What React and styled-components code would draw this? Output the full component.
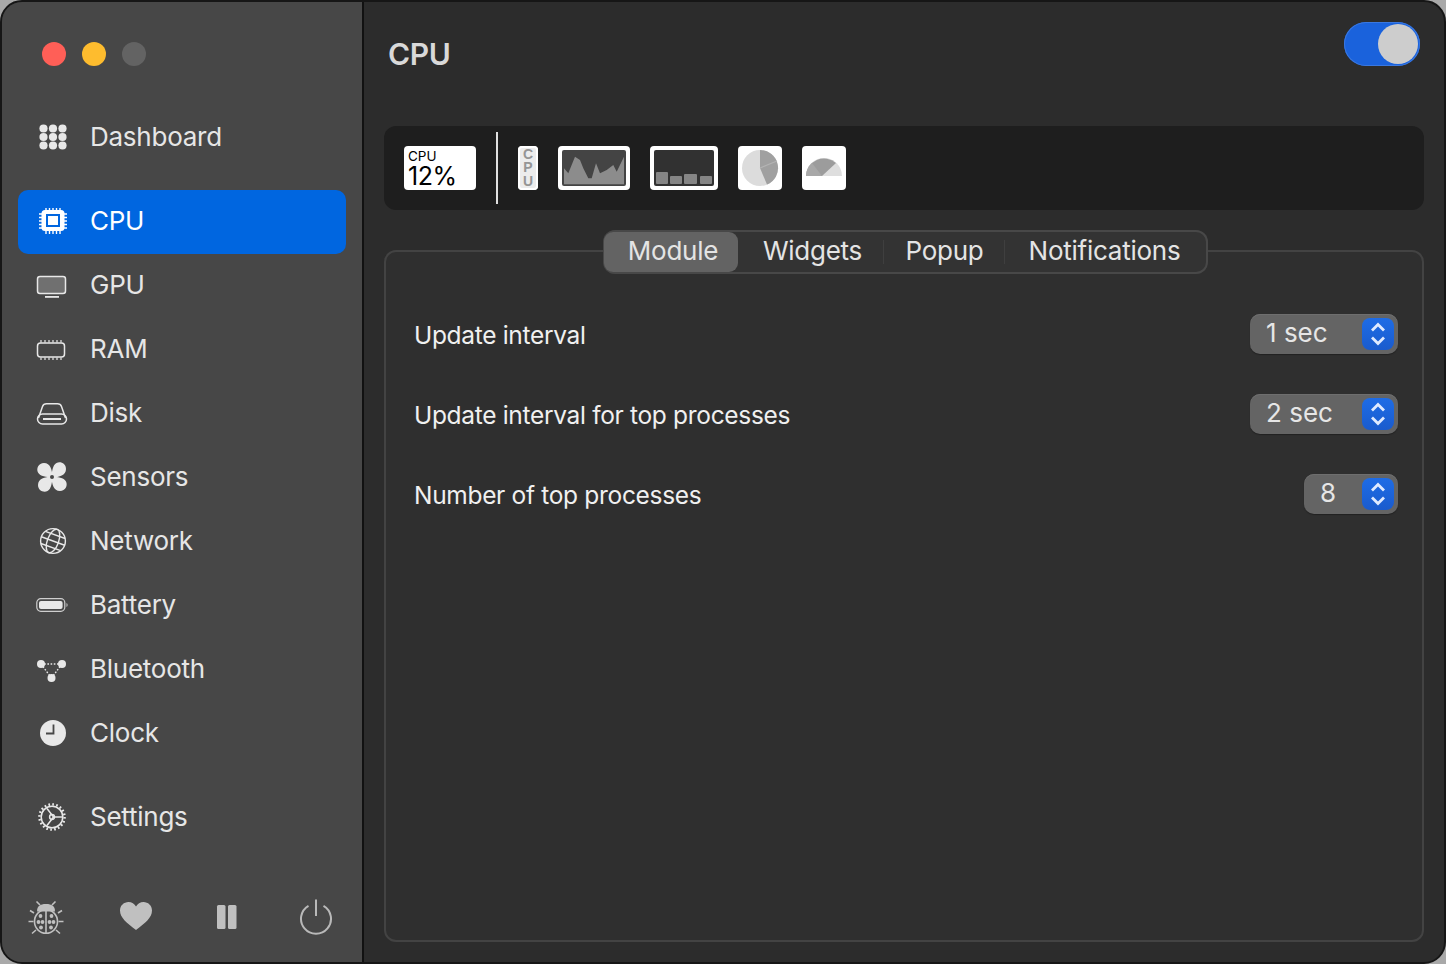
import React from "react";
import styled, { createGlobalStyle } from "styled-components";

const Global = createGlobalStyle`
  html, body { margin: 0; padding: 0; background: #a9a9a9; }
  body { font-family: Inter, "Noto Sans", "Liberation Sans", sans-serif; -webkit-font-smoothing: antialiased; }
  * { box-sizing: border-box; }
`;

const Window = styled.div`
  width: 1446px; height: 964px; display: flex; overflow: hidden;
  border-radius: 22px; border: 2px solid #161616; background: #2c2c2c;
`;
const Sidebar = styled.aside`
  width: 360px; flex: none; background: #474747; display: flex; flex-direction: column;
`;
const Divider = styled.div`width: 2px; flex: none; background: #111;`;
const Lights = styled.div`display: flex; gap: 16px; padding: 40px 0 0 40px; height: 104px;`;
const Light = styled.span`width: 24px; height: 24px; border-radius: 50%; background: ${p => p.$c};`;
const Nav = styled.nav`display: flex; flex-direction: column; padding: 0 16px;`;
const Item = styled.div`
  height: 64px; display: flex; align-items: center; gap: 22px; padding: 0 0 2px 18px;
  border-radius: 10px; font-size: 26px; letter-spacing: -0.25px; line-height: 30px;
  color: ${p => p.$active ? "#fff" : "#e6e6e6"};
  background: ${p => p.$active ? "#0066e0" : "transparent"};
  margin-top: ${p => p.$gap || 0}px;
  svg { flex: none; display: block; }
`;
const ItemText = styled.span`display: block; margin-top: -1px;`;
const Footer = styled.div`
  margin-top: auto; display: grid; grid-template-columns: repeat(4, 90px); height: 44px;
  margin-bottom: 23px; margin-left: -1px; justify-items: center; align-items: center; color: #c0c0c0;
`;
const Main = styled.main`flex: 1; display: flex; flex-direction: column; padding: 0 20px 20px 20px;`;
const Header = styled.header`
  height: 124px; flex: none; display: flex; justify-content: space-between; padding: 20px 4px 0 4px;
`;
const Title = styled.h1`
  margin: 14px 0 0; font-size: 30px; line-height: 36px; font-weight: 600; color: #d9d9d9; letter-spacing: -0.3px;
`;
const Toggle = styled.div`
  width: 76px; height: 44px; border-radius: 22px; background: #1a62dc; padding: 2px 2px;
  display: flex; justify-content: flex-end; box-shadow: inset 0 0 0 1px #3a78e0;
`;
const Knob = styled.span`width: 40px; height: 40px; border-radius: 50%; background: #cdcdcd;`;
const WidgetBar = styled.div`
  height: 84px; flex: none; background: #1e1e1e; border-radius: 12px; display: flex; align-items: center; padding-left: 20px;
`;
const Thumb = styled.div`
  width: ${p => p.$w}px; height: 44px; flex: none; margin-right: ${p => p.$mr}px; background: ${p => p.$bg || "#fff"};
  border-radius: 4px; overflow: hidden;
  svg { display: block; }
`;
const TextThumb = styled(Thumb)`color: #000; padding: 4px 0 0 4px;`;
const Small = styled.div`font-size: 13.5px; line-height: 13px;`;
const Big = styled.div`font-size: 25px; line-height: 26px; letter-spacing: -0.5px; font-weight: 400;`;
const VText = styled(Thumb)`
  display: flex; flex-direction: column; align-items: center; justify-content: center; background: #ececec;
  box-shadow: inset 0 0 0 2px #fff;
  color: #959595; font: 700 14px/13.5px "Liberation Sans", sans-serif;
`;
const Sep = styled.div`width: 2px; height: 72px; flex: none; background: #e0e0e0; margin: 0 20px;`;
const Panel = styled.section`
  flex: 1; margin-top: 40px; border: 2px solid #434343; border-radius: 12px; background: #2f2f2f;
  display: flex; flex-direction: column;
`;
const Tabs = styled.div`
  align-self: flex-start; margin: -22px 0 0 217px; height: 44px; width: 605px; padding: 1px;
  display: flex; align-items: center; box-shadow: inset 0 0 0 2px #484848; border-radius: 12px; background: #333;
  color: #e4e4e4; font-size: 26px; letter-spacing: -0.25px;
`;
const Tab = styled.div`
  height: 40px; display: flex; align-items: center; justify-content: center; width: ${p => p.$w}px;
  border-radius: 9px; background: ${p => p.$active ? "#636363" : "transparent"}; flex: none;
  padding: 0 0 3px ${p => p.$pl || 0}px;
`;
const TabSep = styled.div`width: 1px; height: 24px; flex: none; background: #3f3f3f;`;
const Rows = styled.div`display: flex; flex-direction: column; padding: 20px 24px 0 28px;`;
const Row = styled.div`height: 80px; display: flex; align-items: center; justify-content: space-between;`;
const Label = styled.div`font-size: 24.5px; letter-spacing: -0.32px; color: #f0f0f0; font-weight: 400; padding-top: 2px;`;
const Select = styled.div`
  width: ${p => p.$w}px; height: 40px; border-radius: 10px; background: #646464; display: flex; align-items: center;
  justify-content: space-between; padding: 0 4px 0 ${p => p.$pl}px; color: #e6e6e6; font-size: 26px;
  box-shadow: 0 1px 1px #222, inset 0 1px 0 #6e6e6e;
`;
const SelectValue = styled.span`display: block; margin-top: -3px;`;
const Stepper = styled.div`
  width: 32px; height: 32px; border-radius: 8px; background: linear-gradient(#1e6ce6, #1a5bcd);
  display: flex; align-items: center; justify-content: center; svg { display: block; }
`;

const W = "#e8e8e8";
const Dash = () => (
  <svg width="32" height="32" fill={W}>
    {[7.5, 17, 26.5].flatMap(x => [7.5, 16, 24.5].map(y => <circle key={x + "-" + y} cx={x} cy={y} r="4.1" />))}
  </svg>
);
const Cpu = () => (
  <svg width="32" height="32" fill="none">
    <g stroke="#fff" strokeWidth="1.4">
      {[10, 13.5, 17, 20.5, 24].map(v => (
        <g key={v}>
          <path d={`M${v} 3v4M${v} 25v4`} />
          <path d={`M3 ${v - 1}h4M27 ${v - 1}h4`} />
        </g>
      ))}
    </g>
    <rect x="5.5" y="5" width="23" height="21" rx="3.5" fill="#fff" />
    <rect x="10" y="9" width="14" height="13" fill="#0066e0" />
    <rect x="12" y="11" width="10" height="9" fill="#fff" />
  </svg>
);
const Gpu = () => (
  <svg width="32" height="32">
    <rect x="1.5" y="7.5" width="28" height="17" rx="2.5" fill="#707070" stroke={W} strokeWidth="1.5" />
    <rect x="9" y="27" width="14" height="1.8" fill={W} />
  </svg>
);
const Ram = () => (
  <svg width="32" height="32" fill="none" stroke={W} strokeWidth="1.5">
    <rect x="1.5" y="10" width="27" height="14" rx="3" />
    <path d="M5 7v2.5M9 7v2.5M13 7v2.5M17 7v2.5M21 7v2.5M25 7v2.5M5 24.5V27M9 24.5V27M13 24.5V27M17 24.5V27M21 24.5V27M25 24.5V27" strokeWidth="1.2" />
  </svg>
);
const Disk = () => (
  <svg width="32" height="32" fill="none" stroke={W} strokeWidth="1.5">
    <path d="M2.5 21 L6.5 9.5 Q7.5 6.8 10.5 6.8 H21.5 Q24.5 6.8 25.5 9.5 L29.5 21" />
    <rect x="1.5" y="17" width="29" height="10" rx="5" />
    <path d="M7 22h18" strokeWidth="2" />
  </svg>
);
const Fan = () => (
  <svg width="32" height="32" fill={W}>
    {[0, 90, 180, 270].map(a => (
      <path key={a} transform={`rotate(${a} 16 16)`} d="M16.5 15C16 9 14.5 2 8 2C2.5 2 0 7.5 2 11.5C4 15.5 11 16 15 16.5Z" />
    ))}
    <circle cx="16" cy="16" r="3.6" />
    <circle cx="16" cy="16" r="2" fill="#474747" />
  </svg>
);
const Globe = () => (
  <svg width="32" height="32" fill="none" stroke={W} strokeWidth="1.4">
    <circle cx="17" cy="16" r="12.4" />
    <g transform="rotate(20 17 16)">
      <ellipse cx="17" cy="16" rx="5.6" ry="12.4" />
      <path d="M4.6 16h24.8M6.5 9.5h21M6.5 22.5h21" />
    </g>
  </svg>
);
const Battery = () => (
  <svg width="32" height="32">
    <rect x="0.8" y="9.7" width="28" height="12.6" rx="4" fill="none" stroke="#cfcfcf" strokeWidth="1.2" />
    <rect x="3" y="12" width="23.6" height="8" rx="2" fill={W} />
    <path d="M30.5 14a2.4 2.4 0 0 1 0 4z" fill="#cfcfcf" />
  </svg>
);
const Bt = () => (
  <svg width="32" height="32" fill={W}>
    <path d="M5 11h21M5 11l10.5 14M26 11L15.5 25" stroke={W} strokeWidth="1.4" strokeDasharray="1.6 1.6" fill="none" />
    <circle cx="5" cy="11" r="4" />
    <circle cx="26" cy="11" r="4" />
    <circle cx="15.5" cy="25" r="4" />
  </svg>
);
const Clock = () => (
  <svg width="32" height="32" fill="none">
    <circle cx="17" cy="16" r="13" fill={W} />
    <path d="M17.5 7.5V16.5H10" stroke="#474747" strokeWidth="1.8" />
  </svg>
);
const Gear = () => (
  <svg width="32" height="32" fill="none" stroke={W}>
    <circle cx="16" cy="16" r="10.8" strokeWidth="1.5" />
    <circle cx="16" cy="16" r="12.6" strokeWidth="2.4" strokeDasharray="1.7 2.25" />
    <path d="M26 16H17.5L11 7.5M17.5 16L11 24.5" strokeWidth="1.5" />
    <circle cx="16" cy="16" r="2.4" strokeWidth="1.5" />
  </svg>
);
const Chevrons = () => (
  <svg width="20" height="28" fill="none" stroke="#dfeaff" strokeWidth="2.8">
    <path d="M4 10.5L10 4.5L16 10.5M4 17.5L10 23.5L16 17.5" />
  </svg>
);
const Bug = () => (
  <svg width="38" height="38" fill="#c0c0c0">
    <path d="M10 13.5C10 8 13 6 19 6S28 8 28 13.5Z" />
    <g stroke="#c0c0c0" strokeWidth="1.6" fill="none">
      <ellipse cx="19" cy="23.5" rx="11.5" ry="11.8" />
      <path d="M19 13v22M13 7L9.5 3.5M25 7L28.5 3.5M7 15L3 12.5M31 15L35 12.5M6.5 23.5H1.5M31.5 23.5H36.5M9 32l-4 3.5M29 32l4 3.5" />
    </g>
    {[[13.5, 18], [24.5, 18], [11.5, 24], [26.5, 24], [14, 29.5], [24, 29.5], [15.5, 24], [22.5, 24]].map(([x, y]) => (
      <circle key={x + "-" + y} cx={x} cy={y} r="1.9" />
    ))}
  </svg>
);
const Heart = () => (
  <svg width="34" height="32" fill="#c0c0c0">
    <path d="M17 29C8 22 1 17 1 9.5C1 4.5 5 1 9.5 1C12.8 1 15.5 2.8 17 5.5C18.5 2.8 21.2 1 24.5 1C29 1 33 4.5 33 9.5C33 17 26 22 17 29Z" />
  </svg>
);
const Pause = () => (
  <svg width="24" height="26" fill="#c0c0c0">
    <rect x="3" y="1" width="8.5" height="24" rx="1.5" />
    <rect x="14" y="1" width="8.5" height="24" rx="1.5" />
  </svg>
);
const Power = () => (
  <svg width="34" height="36" fill="none" stroke="#b9b9b9" strokeWidth="2">
    <path d="M9.5 6.8A15 15 0 1 0 24.5 6.8M17 0.5V17" />
  </svg>
);

const LineThumb = () => (
  <Thumb $w={72} $mr={20}>
    <svg width="72" height="44">
      <rect x="4" y="4" width="64" height="36" rx="2" fill="#444" />
      <path
        d="M6 38.3V22.3L10.3 27.3L17 10.7L22 14L25.3 22.3L30.3 32.3L33.7 32.3L38 17.3L42 27.3L48.7 24L55.3 19L58.7 25.7L66 10.7V38.3Z"
        fill="#8c8c8c"
      />
    </svg>
  </Thumb>
);
const BarThumb = () => (
  <Thumb $w={68} $mr={20}>
    <svg width="68" height="44">
      <rect x="4" y="4" width="60" height="36" rx="2" fill="#313131" />
      <g fill="#858585">
        <rect x="6" y="26" width="12" height="12" rx="1" />
        <rect x="20" y="30" width="12" height="8" rx="1" />
        <rect x="34" y="28" width="13" height="10" rx="1" />
        <rect x="50" y="30" width="12" height="8" rx="1" />
      </g>
    </svg>
  </Thumb>
);
const PieThumb = () => (
  <Thumb $w={44} $mr={20}>
    <svg width="44" height="44">
      <circle cx="22" cy="22" r="18" fill="#dcdcdc" />
      <path d="M22 22L22 4A18 18 0 0 1 29 38.6Z" fill="#a0a0a0" />
      <path d="M22 22L39 15" stroke="#b4b4b4" strokeWidth="1.2" />
    </svg>
  </Thumb>
);
const GaugeThumb = () => (
  <Thumb $w={44} $mr={0}>
    <svg width="44" height="44">
      <path d="M4 30A18 18 0 0 1 40 30Z" fill="#dedede" />
      <path d="M4 30A18 18 0 0 1 34 17L20 30Z" fill="#9c9c9c" />
      <path d="M4 30A18 18 0 0 1 10 17L20 30Z" fill="#a8a8a8" />
    </svg>
  </Thumb>
);

const items = [
  ["GPU", Gpu], ["RAM", Ram], ["Disk", Disk], ["Sensors", Fan], ["Network", Globe],
  ["Battery", Battery], ["Bluetooth", Bt], ["Clock", Clock],
];

const Setting = ({ label, value, w, pl }) => (
  <Row>
    <Label>{label}</Label>
    <Select $w={w} $pl={pl}>
      <SelectValue>{value}</SelectValue>
      <Stepper><Chevrons /></Stepper>
    </Select>
  </Row>
);

export default function App() {
  return (
    <>
      <Global />
      <Window>
        <Sidebar>
          <Lights>
            <Light $c="#ff5f57" />
            <Light $c="#febc2e" />
            <Light $c="#636363" />
          </Lights>
          <Nav>
            <Item><Dash /><ItemText>Dashboard</ItemText></Item>
            <Item $active $gap={20}><Cpu /><ItemText>CPU</ItemText></Item>
            {items.map(([name, Ic]) => <Item key={name}><Ic /><ItemText>{name}</ItemText></Item>)}
            <Item $gap={20}><Gear /><ItemText>Settings</ItemText></Item>
          </Nav>
          <Footer>
            <Bug /><Heart /><Pause /><Power />
          </Footer>
        </Sidebar>
        <Divider />
        <Main>
          <Header>
            <Title>CPU</Title>
            <Toggle><Knob /></Toggle>
          </Header>
          <WidgetBar>
            <TextThumb $w={72} $mr={0}>
              <Small>CPU</Small>
              <Big>12%</Big>
            </TextThumb>
            <Sep />
            <VText $w={20} $mr={20}><span>C</span><span>P</span><span>U</span></VText>
            <LineThumb />
            <BarThumb />
            <PieThumb />
            <GaugeThumb />
          </WidgetBar>
          <Panel>
            <Tabs>
              <Tab $w={134} $active $pl={4}>Module</Tab>
              <Tab $w={145} $pl={4}>Widgets</Tab>
              <TabSep />
              <Tab $w={120} $pl={1}>Popup</Tab>
              <TabSep />
              <Tab $w={199}>Notifications</Tab>
            </Tabs>
            <Rows>
              <Setting label="Update interval" value="1 sec" w={148} pl={16} />
              <Setting label="Update interval for top processes" value="2 sec" w={148} pl={16} />
              <Setting label="Number of top processes" value="8" w={94} pl={16} />
            </Rows>
          </Panel>
        </Main>
      </Window>
    </>
  );
}
